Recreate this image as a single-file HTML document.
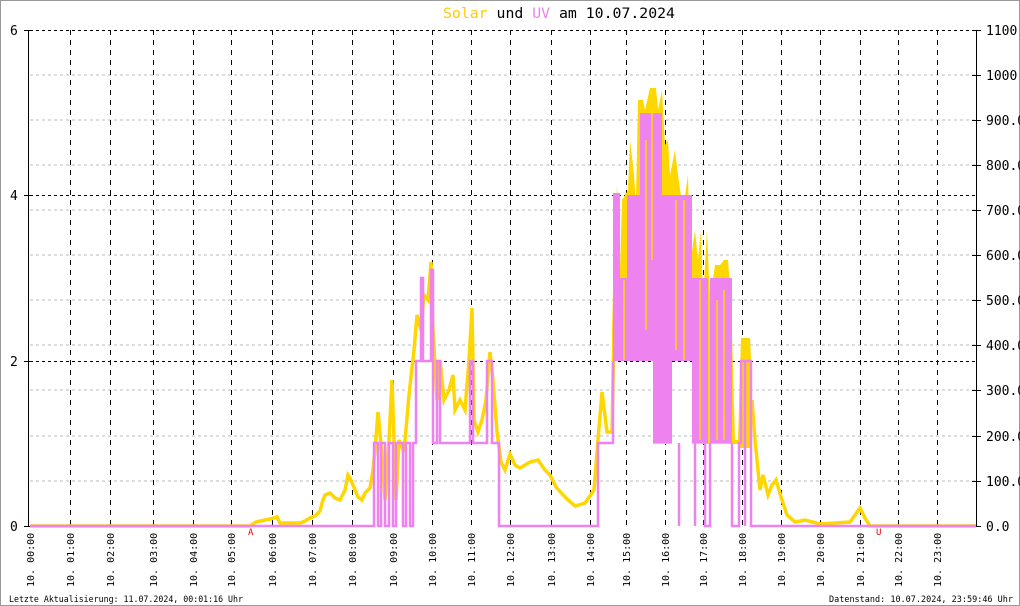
<!DOCTYPE html>
<html><head><meta charset="utf-8"><style>
html,body{margin:0;padding:0;background:#fff}
svg{display:block}
text{font-family:"DejaVu Sans Mono","Liberation Mono",monospace}
</style></head><body>
<svg width="1020" height="606" viewBox="0 0 1020 606" xmlns="http://www.w3.org/2000/svg">
<rect x="0.5" y="0.5" width="1019" height="605" fill="#fff" stroke="#999"/>
<text x="443" y="18" font-size="14" textLength="232" lengthAdjust="spacingAndGlyphs"><tspan fill="#ffcc00">Solar</tspan> und <tspan fill="#ee82ee">UV</tspan> am 10.07.2024</text>
<g stroke="#bbb" stroke-dasharray="3,3">
<line x1="30" y1="75" x2="976" y2="75"/><line x1="30" y1="120" x2="976" y2="120"/><line x1="30" y1="165" x2="976" y2="165"/>
<line x1="30" y1="210" x2="976" y2="210"/><line x1="30" y1="255" x2="976" y2="255"/><line x1="30" y1="300" x2="976" y2="300"/>
<line x1="30" y1="345" x2="976" y2="345"/><line x1="30" y1="390" x2="976" y2="390"/><line x1="30" y1="436" x2="976" y2="436"/>
<line x1="30" y1="481" x2="976" y2="481"/>
</g>
<g stroke="#000" stroke-dasharray="3,3">
<line x1="30" y1="30.5" x2="976" y2="30.5"/><line x1="30" y1="195.5" x2="976" y2="195.5"/><line x1="30" y1="361.5" x2="976" y2="361.5"/>
</g>
<g stroke="#000" stroke-dasharray="5,5">
<line x1="70.5" y1="30" x2="70.5" y2="526"/><line x1="110.5" y1="30" x2="110.5" y2="526"/><line x1="153.5" y1="30" x2="153.5" y2="526"/>
<line x1="193.5" y1="30" x2="193.5" y2="526"/><line x1="231.5" y1="30" x2="231.5" y2="526"/><line x1="272.5" y1="30" x2="272.5" y2="526"/>
<line x1="312.5" y1="30" x2="312.5" y2="526"/><line x1="352.5" y1="30" x2="352.5" y2="526"/><line x1="393.5" y1="30" x2="393.5" y2="526"/>
<line x1="432.5" y1="30" x2="432.5" y2="526"/><line x1="471.5" y1="30" x2="471.5" y2="526"/><line x1="510.5" y1="30" x2="510.5" y2="526"/>
<line x1="551.5" y1="30" x2="551.5" y2="526"/><line x1="590.5" y1="30" x2="590.5" y2="526"/><line x1="626.5" y1="30" x2="626.5" y2="526"/>
<line x1="665.5" y1="30" x2="665.5" y2="526"/><line x1="703.5" y1="30" x2="703.5" y2="526"/><line x1="742.5" y1="30" x2="742.5" y2="526"/>
<line x1="781.5" y1="30" x2="781.5" y2="526"/><line x1="820.5" y1="30" x2="820.5" y2="526"/><line x1="860.5" y1="30" x2="860.5" y2="526"/>
<line x1="898.5" y1="30" x2="898.5" y2="526"/><line x1="937.5" y1="30" x2="937.5" y2="526"/>
</g>
<g stroke="#000">
<line x1="28.5" y1="30" x2="28.5" y2="527"/><line x1="976.5" y1="30" x2="976.5" y2="527"/>
<line x1="24" y1="30.5" x2="30" y2="30.5"/><line x1="24" y1="195.5" x2="30" y2="195.5"/><line x1="24" y1="361.5" x2="30" y2="361.5"/><line x1="24" y1="526.5" x2="30" y2="526.5"/>
<line x1="972" y1="30.5" x2="981" y2="30.5"/><line x1="972" y1="75.5" x2="981" y2="75.5"/><line x1="972" y1="120.5" x2="981" y2="120.5"/><line x1="972" y1="165.5" x2="981" y2="165.5"/><line x1="972" y1="210.5" x2="981" y2="210.5"/><line x1="972" y1="255.5" x2="981" y2="255.5"/><line x1="972" y1="300.5" x2="981" y2="300.5"/><line x1="972" y1="345.5" x2="981" y2="345.5"/><line x1="972" y1="390.5" x2="981" y2="390.5"/><line x1="972" y1="436.5" x2="981" y2="436.5"/><line x1="972" y1="481.5" x2="981" y2="481.5"/><line x1="972" y1="526.5" x2="981" y2="526.5"/>
</g>
<g font-size="13" fill="#000">
<text x="10" y="35">6</text><text x="10" y="200">4</text><text x="10" y="366">2</text><text x="10" y="531">0</text>
<text x="986" y="35">1100</text><text x="986" y="80">1000</text><text x="986" y="125">900.0</text><text x="986" y="170">800.0</text><text x="986" y="215">700.0</text><text x="986" y="260">600.0</text><text x="986" y="305">500.0</text><text x="986" y="350">400.0</text><text x="986" y="395">300.0</text><text x="986" y="441">200.0</text><text x="986" y="486">100.0</text><text x="986" y="531">0.0</text>
</g>
<path fill="#ffd700" d="M612 361 L612 330 L614 250 L617 185 L620 270 L622 200 L628 190 L630 140 L633 165 L636 200 L638 100 L643 100 L645 110 L650 88 L656 88 L658 110 L662 90 L665 145 L668 140 L670 175 L675 150 L678 175 L683 210 L688 175 L690 265 L695 230 L698 260 L701 230 L703 300 L707 230 L710 300 L715 265 L720 265 L724 260 L728 260 L731 300 L735 440 L738 440 L741 338 L750 338 L752 380 L752 448 L738 448 L738 444 L692 444 L692 361 L672 361 L672 444 L653 444 L653 361 Z"/>
<path fill="none" stroke="#ffd700" stroke-width="3.5" d="M30 526 L250 526 L256 522 L265 520 L270 519 L277 517 L280 523 L300 523 L305 521 L310 518 L315 516 L320 511 L322 503 L325 495 L330 493 L335 498 L340 500 L345 490 L348 475 L350 478 L355 490 L358 497 L362 500 L365 493 L370 488 L373 470 L375 450 L378 412 L382 455 L385 500 L389 440 L392 380 L396 500 L399 440 L404 452 L409 395 L414 350 L417 315 L421 330 L424 295 L428 300 L431 262 L433 330 L437 400 L440 360 L444 400 L449 390 L453 375 L455 410 L460 400 L465 410 L469 360 L472 308 L474 420 L478 432 L482 420 L486 400 L490 352 L493 380 L497 432 L501 462 L505 470 L510 454 L515 465 L520 468 L530 462 L538 460 L545 470 L550 475 L556 487 L566 498 L575 506 L585 503 L594 490 L598 440 L602 392 L607 432 L612 432 L614 330 M752 400 L755 440 L760 490 L763 475 L768 495 L772 485 L776 480 L782 500 L787 515 L795 522 L805 520 L820 524 L850 522 L855 515 L860 508 L865 518 L870 526 L976 526"/>
<g fill="#ee82ee">
<rect x="613" y="193" width="7" height="85"/><rect x="613" y="278" width="14" height="83"/>
<rect x="627" y="195" width="13" height="166"/><rect x="640" y="113" width="22" height="248"/>
<rect x="653" y="361" width="9" height="82"/><rect x="662" y="195" width="30" height="166"/>
<rect x="662" y="361" width="10" height="82"/><rect x="692" y="278" width="16" height="165"/>
<rect x="710" y="278" width="22" height="165"/>
</g>
<path fill="none" stroke="#ffd700" stroke-width="1.5" d="M624 280 L624 360 M646 140 L646 330 M652 100 L652 260 M676 200 L676 350 M684 200 L684 360 M700 280 L700 440 M717 300 L717 440 M724 290 L724 440"/>
<path fill="none" stroke="#ee82ee" stroke-width="2.5" d="M30 526 L374 526 L374 443 L378 443 L378 526 L381 526 L381 443 L385 443 L385 526 L389 526 L389 443 L393 443 L393 526 L396 526 L396 443 L403 443 L403 526 L406 526 L406 443 L410 443 L410 526 L413 526 L413 443 L416 443 L416 361 L421 361 L421 278 L423 278 L423 361 L431 361 L431 270 L433 270 L433 443 L437 443 L437 361 L440 361 L440 443 L470 443 L470 361 L473 361 L473 443 L487 443 L487 361 L492 361 L492 443 L499 443 L499 526 L598 526 L598 443 L613 443 L613 361 M679 443 L679 526 M695 443 L695 526 M705 443 L705 526 L710 526 L710 443 M732 443 L732 526 L739 526 L739 443 L741 443 L741 361 L751 361 L751 526 L976 526 M745 361 L745 526"/>
<text x="248" y="535" font-size="9" fill="#e00">A</text>
<text x="876" y="535" font-size="9" fill="#e00">U</text>
<g font-size="10" fill="#000">
<text transform="translate(34,587) rotate(-90)">10. 00:00</text>
<text transform="translate(74,587) rotate(-90)">10. 01:00</text>
<text transform="translate(114,587) rotate(-90)">10. 02:00</text>
<text transform="translate(157,587) rotate(-90)">10. 03:00</text>
<text transform="translate(197,587) rotate(-90)">10. 04:00</text>
<text transform="translate(235,587) rotate(-90)">10. 05:00</text>
<text transform="translate(276,587) rotate(-90)">10. 06:00</text>
<text transform="translate(316,587) rotate(-90)">10. 07:00</text>
<text transform="translate(356,587) rotate(-90)">10. 08:00</text>
<text transform="translate(397,587) rotate(-90)">10. 09:00</text>
<text transform="translate(436,587) rotate(-90)">10. 10:00</text>
<text transform="translate(475,587) rotate(-90)">10. 11:00</text>
<text transform="translate(514,587) rotate(-90)">10. 12:00</text>
<text transform="translate(555,587) rotate(-90)">10. 13:00</text>
<text transform="translate(594,587) rotate(-90)">10. 14:00</text>
<text transform="translate(630,587) rotate(-90)">10. 15:00</text>
<text transform="translate(669,587) rotate(-90)">10. 16:00</text>
<text transform="translate(707,587) rotate(-90)">10. 17:00</text>
<text transform="translate(746,587) rotate(-90)">10. 18:00</text>
<text transform="translate(785,587) rotate(-90)">10. 19:00</text>
<text transform="translate(824,587) rotate(-90)">10. 20:00</text>
<text transform="translate(864,587) rotate(-90)">10. 21:00</text>
<text transform="translate(902,587) rotate(-90)">10. 22:00</text>
<text transform="translate(941,587) rotate(-90)">10. 23:00</text>
</g>
<text x="9" y="602" font-size="9" fill="#000" textLength="234" lengthAdjust="spacingAndGlyphs">Letzte Aktualisierung: 11.07.2024, 00:01:16 Uhr</text>
<text x="829" y="602" font-size="9" fill="#000" textLength="184" lengthAdjust="spacingAndGlyphs">Datenstand: 10.07.2024, 23:59:46 Uhr</text>
</svg>
</body></html>
